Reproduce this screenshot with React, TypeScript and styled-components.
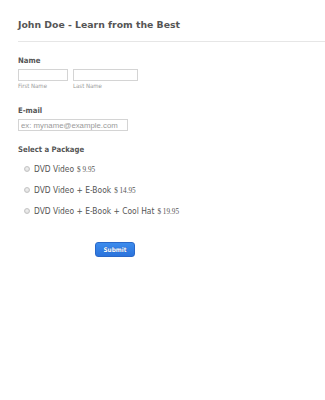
import React from "react";
import styled, { createGlobalStyle } from "styled-components";

const GlobalStyle = createGlobalStyle`
  html, body {
    margin: 0;
    padding: 0;
    background: #fff;
  }
  body {
    font-family: "DejaVu Sans Condensed", "DejaVu Sans", Verdana, sans-serif;
    color: #555;
  }
`;

const Form = styled.form`
  width: 325px;
  padding-bottom: 40px;
`;

const Header = styled.div`
  margin-left: 18px;
  padding: 18px 0 10px;
  border-bottom: 1px solid #e6e6e6;
`;

const Title = styled.h1`
  margin: 0;
  font-family: "DejaVu Sans", Verdana, sans-serif;
  font-size: 9.3px;
  line-height: 13px;
  font-weight: bold;
  color: #555;
`;

const Section = styled.div<{ $top: number }>`
  padding-left: 18px;
  margin-top: ${(p) => p.$top}px;
`;

const Label = styled.div`
  font-size: 7.7px;
  line-height: 10px;
  font-weight: bold;
  color: #555;
  margin-bottom: 3px;
`;

const Row = styled.div`
  display: flex;
  gap: 5px;
`;

const Field = styled.div`
  display: flex;
  flex-direction: column;
`;

const TextInput = styled.input<{ $width: number }>`
  display: block;
  box-sizing: border-box;
  width: ${(p) => p.$width}px;
  height: 12px;
  margin: 0;
  padding: 0 2px;
  border: 1px solid #d4d4d4;
  border-radius: 0;
  outline: none;
  font-family: "Liberation Sans", Arial, sans-serif;
  font-size: 7.8px;
  color: #555;
  &::placeholder {
    color: #9a9a9a;
  }
`;

const SubLabel = styled.span`
  font-size: 6px;
  line-height: 9px;
  color: #999;
`;

const Options = styled.div`
  display: flex;
  flex-direction: column;
  padding-left: 6px;
  margin-top: 1px;
`;

const Option = styled.label`
  display: flex;
  align-items: center;
  height: 21px;
  cursor: pointer;
`;

const OptionText = styled.span`
  font-size: 8.4px;
  color: #555;
`;

const Radio = styled.input`
  appearance: none;
  box-sizing: border-box;
  width: 6px;
  height: 6px;
  margin: 0 4px 0 0;
  border-radius: 50%;
  border: 1px solid #c4c4c4;
  background: radial-gradient(circle at 50% 40%, #f2f2f2 0%, #d6d6d6 100%);
`;

const Price = styled.span`
  margin-left: 3px;
  font-family: "Liberation Serif", "Times New Roman", serif;
  font-size: 7.2px;
  color: #555;
`;

const ButtonRow = styled.div`
  padding-left: 95px;
  margin-top: 21px;
`;

const SubmitButton = styled.button`
  display: block;
  box-sizing: border-box;
  width: 40px;
  height: 15px;
  padding: 0;
  border: 1px solid #2a68c8;
  border-radius: 3px;
  background: linear-gradient(#3c8ced, #2b73dc);
  color: #fff;
  font-family: "DejaVu Sans Condensed", "DejaVu Sans", Verdana, sans-serif;
  font-size: 6.4px;
  font-weight: bold;
  text-shadow: 0 0 1px #1a4fa0;
  cursor: pointer;
`;

const packages = [
  { name: "DVD Video", price: "$ 9.95" },
  { name: "DVD Video + E-Book", price: "$ 14.95" },
  { name: "DVD Video + E-Book + Cool Hat", price: "$ 19.95" },
];

export default function App() {
  return (
    <>
      <GlobalStyle />
      <Form onSubmit={(e) => e.preventDefault()}>
        <Header>
          <Title>John Doe - Learn from the Best</Title>
        </Header>

        <Section $top={14}>
          <Label>Name</Label>
          <Row>
            <Field>
              <TextInput $width={50} />
              <SubLabel>First Name</SubLabel>
            </Field>
            <Field>
              <TextInput $width={65} />
              <SubLabel>Last Name</SubLabel>
            </Field>
          </Row>
        </Section>

        <Section $top={16}>
          <Label>E-mail</Label>
          <TextInput $width={110} placeholder="ex: myname@example.com" />
        </Section>

        <Section $top={14}>
          <Label>Select a Package</Label>
          <Options>
            {packages.map((p) => (
              <Option key={p.name}>
                <Radio type="radio" name="package" />
                <OptionText>
                  {p.name}
                  <Price>{p.price}</Price>
                </OptionText>
              </Option>
            ))}
          </Options>
        </Section>

        <ButtonRow>
          <SubmitButton type="submit">Submit</SubmitButton>
        </ButtonRow>
      </Form>
    </>
  );
}
